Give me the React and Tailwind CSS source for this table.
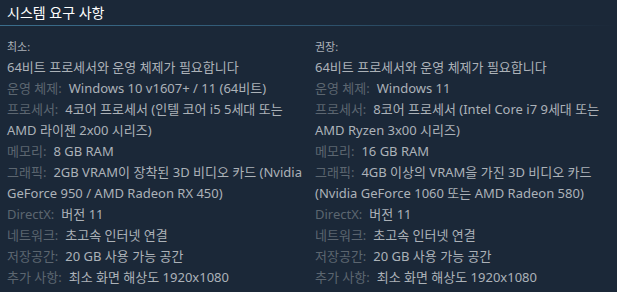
export default function App() {
  const font = { fontFamily: '"Noto Sans", "Noto Sans CJK KR", sans-serif' };
  const left = [
    ["운영 체제:", "Windows 10 v1607+ / 11 (64비트)"],
    ["프로세서:", "4코어 프로세서 (인텔 코어 i5 5세대 또는 AMD 라이젠 2x00 시리즈)"],
    ["메모리:", "8 GB RAM"],
    ["그래픽:", "2GB VRAM이 장착된 3D 비디오 카드 (Nvidia GeForce 950 / AMD Radeon RX 450)"],
    ["DirectX:", "버전 11"],
    ["네트워크:", "초고속 인터넷 연결"],
    ["저장공간:", "20 GB 사용 가능 공간"],
    ["추가 사항:", "최소 화면 해상도 1920x1080"],
  ];
  const right = [
    ["운영 체제:", "Windows 11"],
    ["프로세서:", "8코어 프로세서 (Intel Core i7 9세대 또는 AMD Ryzen 3x00 시리즈)"],
    ["메모리:", "16 GB RAM"],
    ["그래픽:", "4GB 이상의 VRAM을 가진 3D 비디오 카드 (Nvidia GeForce 1060 또는 AMD Radeon 580)"],
    ["DirectX:", "버전 11"],
    ["네트워크:", "초고속 인터넷 연결"],
    ["저장공간:", "20 GB 사용 가능 공간"],
    ["추가 사항:", "최소 화면 해상도 1920x1080"],
  ];
  const Col = ({ head, items, cls }) => (
    <div className={cls}>
      <div className="text-[11px] leading-[14px] text-[#acb2b8] mb-[3px]">{head}</div>
      <ul className="text-[13px] leading-[21px] text-[#acb2b8]">
        <li>64비트 프로세서와 운영 체제가 필요합니다</li>
        {items.map(([k, v]) => (
          <li key={k}>
            <span className="text-[#5c6670]">{k}</span>
            <span className="ml-[7px]">{v}</span>
          </li>
        ))}
      </ul>
    </div>
  );
  return (
    <div className="w-[617px] h-[292px] bg-[#1b2838] overflow-hidden" style={font}>
      <div className="pl-[7px] pt-[3px] h-[25px] text-[14px] leading-[20px] text-white">시스템 요구 사항</div>
      <div className="h-px w-full bg-gradient-to-r from-[#3b6e8c] via-[#2f5570] to-transparent"></div>
      <div className="flex pt-[14px] pl-[7px]">
        <Col head="최소:" items={left} cls="w-[300px]" />
        <Col head="권장:" items={right} cls="ml-[8px] w-[296px]" />
      </div>
    </div>
  );
}
